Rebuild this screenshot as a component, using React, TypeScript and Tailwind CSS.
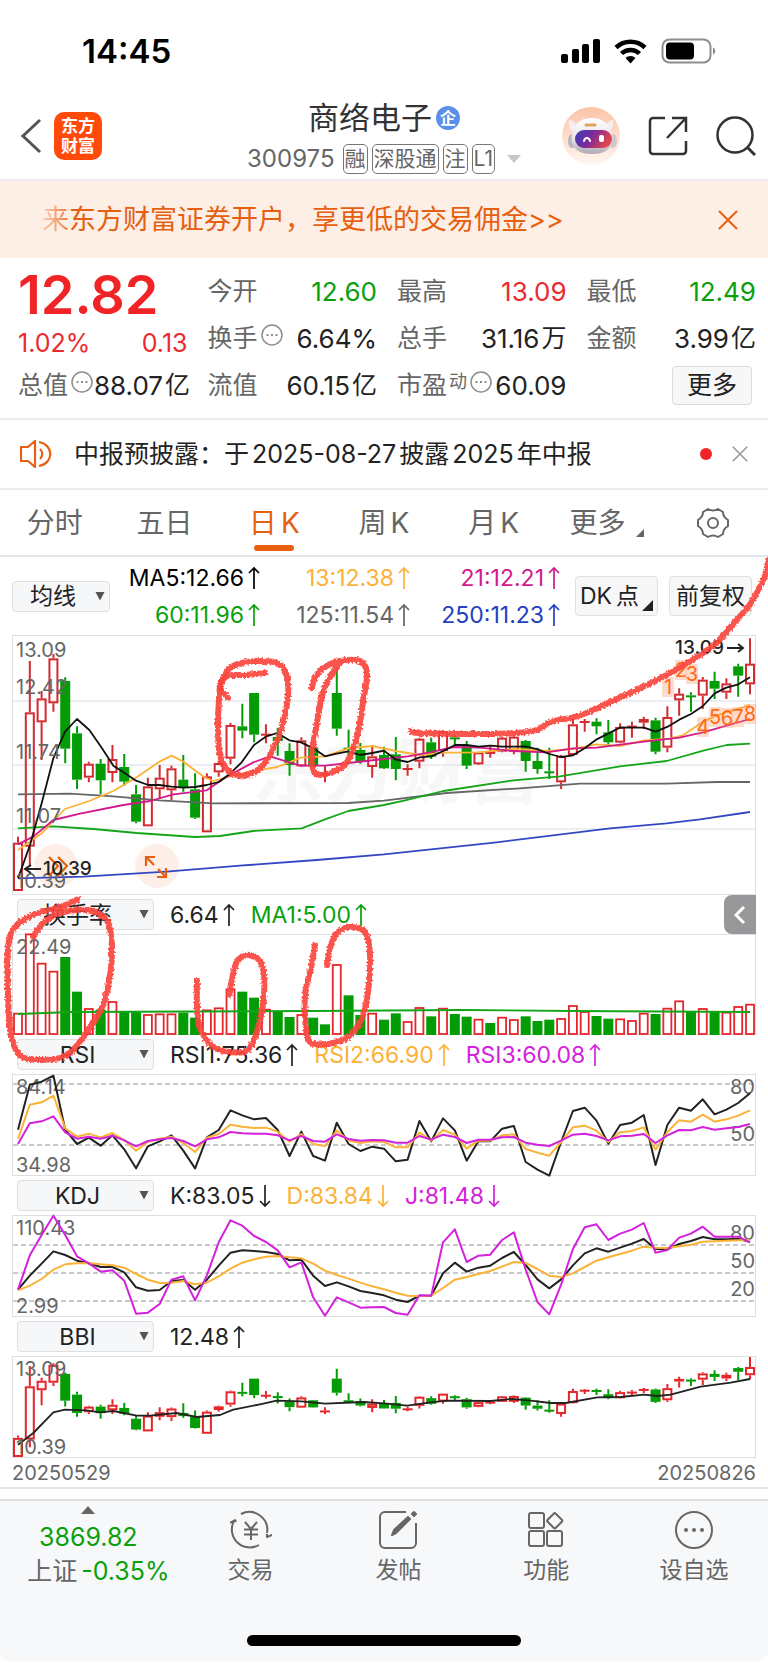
import React from 'react';

type Candle = [high: number, top: number, bottom: number, low: number, up: 0 | 1];
type Point = [number, number];

// Plot levels are stored at three units per pixel, y growing downwards.
const UNIT = 3;
const RED = '#d22b30';
const GREEN = '#039c05';
const MAGENTA = '#d321dc';
const ORANGE = '#fbb236';
const INK = '#222222';
const MUTED = '#666666';

const candles: Candle[] = [
  [845, 863, 1008, 1008, 1], [318, 472, 875, 935, 1], [408, 430, 502, 615, 1], [297, 310, 445, 470, 1],
  [367, 378, 581, 625, 0], [514, 535, 674, 702, 0], [620, 626, 668, 682, 1], [612, 626, 676, 718, 0],
  [570, 612, 654, 682, 1], [597, 636, 680, 692, 0], [690, 718, 800, 805, 0], [668, 694, 814, 814, 1],
  [630, 668, 703, 730, 1], [632, 640, 706, 735, 1], [600, 674, 698, 710, 0], [655, 703, 788, 792, 0],
  [655, 664, 832, 832, 1], [618, 624, 652, 665, 1], [504, 510, 611, 628, 1], [446, 514, 527, 550, 0],
  [414, 414, 539, 562, 0], [508, 536, 542, 565, 1], [518, 546, 558, 602, 0], [565, 588, 630, 662, 0],
  [547, 556, 634, 636, 1], [576, 578, 632, 634, 0], [630, 655, 662, 682, 1], [340, 414, 521, 542, 0],
  [524, 578, 582, 600, 0], [564, 585, 618, 626, 0], [570, 604, 636, 668, 1], [575, 600, 640, 642, 0],
  [546, 598, 642, 676, 0], [628, 639, 643, 662, 1], [548, 551, 620, 640, 1], [548, 562, 605, 612, 0],
  [526, 528, 588, 605, 1], [540, 547, 552, 575, 0], [558, 570, 632, 642, 0], [590, 592, 628, 630, 1],
  [575, 588, 597, 608, 1], [546, 548, 590, 592, 1], [542, 545, 590, 598, 1], [555, 558, 618, 650, 0],
  [578, 618, 642, 656, 0], [578, 649, 653, 672, 0], [600, 603, 682, 702, 1], [490, 508, 600, 603, 1],
  [492, 498, 503, 530, 1], [490, 500, 514, 538, 0], [495, 532, 562, 570, 0], [505, 516, 563, 565, 1],
  [500, 512, 517, 548, 1], [485, 492, 503, 522, 1], [488, 496, 590, 598, 0], [454, 486, 578, 592, 1],
  [400, 416, 436, 482, 1], [412, 421, 425, 470, 0], [366, 374, 422, 462, 1], [350, 378, 401, 432, 0],
  [370, 385, 413, 432, 1], [326, 334, 362, 425, 0], [250, 326, 388, 418, 1],
];

// Negative values are down days.
const turnover = [
  64, 302, 214, 190, -234, -130, 78, -76, 99, -69, -69, 60, 62, 62, -67, -52, 74, 80, 137, -130, -112,
  76, -70, -54, 60, -52, -32, 210, -119, -60, 64, -46, -65, 39, 81, -56, 79, -63, -55, 46, -36, 52, 45,
  -56, -42, -46, 48, 87, 69, -57, -49, 47, 42, 64, -63, 79, 101, -69, 78, -69, 67, 84, 91,
];

const rsi = {
  fast: [
    705, 570, 561, 543, 705, 748, 729, 753, 722, 764, 821, 755, 740, 722, 768, 821, 728, 706, 647, 662, 674,
    670, 706, 784, 711, 784, 798, 684, 748, 769, 756, 762, 800, 795, 679, 740, 671, 707, 798, 739, 740, 702,
    694, 802, 825, 843, 742, 649, 639, 678, 747, 691, 684, 661, 811, 691, 639, 648, 614, 659, 645, 625, 596,
  ],
  mid: [
    733, 630, 623, 603, 701, 726, 717, 728, 715, 736, 768, 741, 732, 726, 745, 772, 729, 718, 690, 696, 700,
    699, 711, 741, 718, 748, 754, 708, 737, 745, 740, 742, 758, 758, 714, 738, 706, 720, 762, 738, 738, 722,
    719, 763, 774, 783, 742, 698, 693, 708, 742, 713, 709, 698, 765, 712, 677, 681, 660, 681, 674, 663, 647,
  ],
  slow: [
    748, 686, 680, 665, 713, 732, 726, 732, 723, 737, 755, 739, 734, 730, 739, 755, 734, 728, 712, 716, 717,
    717, 722, 737, 724, 739, 741, 719, 733, 738, 736, 737, 744, 744, 724, 735, 720, 727, 745, 735, 735, 728,
    727, 744, 750, 754, 738, 720, 717, 724, 737, 725, 723, 718, 745, 722, 706, 707, 697, 705, 701, 697, 688,
  ],
};

const kdj = {
  k: [
    330, 288, 252, 215, 226, 243, 251, 262, 262, 278, 323, 333, 331, 304, 301, 330, 300, 258, 219, 212, 214,
    217, 223, 242, 240, 288, 319, 308, 320, 334, 340, 347, 360, 367, 348, 348, 281, 249, 276, 264, 258, 235,
    217, 256, 299, 326, 299, 257, 221, 206, 216, 204, 192, 178, 208, 209, 193, 184, 172, 179, 179, 178, 186,
  ],
  d: [
    332, 318, 298, 270, 254, 251, 250, 254, 257, 264, 283, 300, 310, 309, 304, 314, 309, 290, 267, 249, 239,
    231, 229, 233, 236, 252, 273, 286, 297, 309, 320, 329, 339, 348, 349, 348, 325, 300, 292, 283, 274, 261,
    247, 250, 268, 288, 292, 281, 262, 243, 233, 223, 213, 201, 204, 205, 200, 195, 186, 185, 183, 182, 182,
  ],
  j: [
    330, 227, 166, 108, 166, 230, 251, 276, 272, 303, 402, 399, 373, 300, 290, 362, 287, 188, 122, 138, 169,
    187, 212, 263, 248, 353, 408, 353, 368, 384, 383, 382, 400, 405, 347, 348, 188, 149, 247, 228, 225, 181,
    158, 270, 367, 404, 315, 208, 143, 134, 181, 162, 150, 130, 219, 211, 174, 162, 141, 171, 171, 171, 188,
  ],
};

const averages: { color: string; points: Point[] }[] = [
  { color: '#3347c4', points: [[54, 970], [250, 965], [500, 950], [720, 932], [950, 915], [1152, 898], [1490, 862], [1830, 820], [2000, 805], [2100, 793], [2250, 771]] },
  { color: MUTED, points: [[54, 718], [210, 716], [340, 724], [478, 736], [640, 745], [1045, 744], [1152, 737], [1340, 714], [1560, 700], [1740, 686], [2000, 686], [2150, 681], [2250, 681]] },
  { color: '#13a518', points: [[54, 820], [160, 814], [280, 822], [410, 834], [585, 846], [660, 843], [760, 828], [905, 820], [975, 793], [1045, 768], [1152, 750], [1212, 737], [1330, 708], [1540, 676], [1680, 664], [1860, 634], [2000, 618], [2110, 587], [2180, 570], [2250, 566]] },
  { color: ORANGE, points: [[54, 885], [125, 835], [195, 762], [268, 738], [340, 708], [408, 668], [478, 620], [515, 602], [550, 620], [615, 668], [640, 678], [690, 664], [760, 648], [832, 636], [903, 608], [975, 604], [1045, 580], [1117, 573], [1188, 588], [1259, 600], [1330, 593], [1436, 592], [1542, 582], [1648, 588], [1719, 582], [1790, 568], [1861, 573], [1932, 556], [2003, 552], [2050, 540], [2109, 500], [2160, 478], [2250, 450]] },
  { color: '#d11a8c', points: [[54, 868], [100, 845], [160, 795], [240, 776], [370, 750], [450, 738], [520, 718], [620, 706], [680, 665], [760, 622], [810, 604], [900, 632], [975, 632], [1045, 624], [1152, 612], [1223, 604], [1290, 592], [1360, 576], [1440, 578], [1540, 588], [1640, 592], [1719, 580], [1790, 578], [1932, 560], [2038, 548], [2109, 532], [2250, 492]] },
  { color: '#111111', points: [[54, 970], [90, 870], [125, 745], [160, 610], [195, 530], [231, 492], [268, 525], [303, 575], [340, 632], [374, 654], [408, 677], [445, 690], [478, 690], [515, 695], [550, 698], [585, 696], [620, 690], [656, 681], [690, 656], [725, 622], [762, 570], [797, 545], [832, 534], [868, 556], [903, 562], [940, 580], [975, 604], [1010, 596], [1045, 589], [1080, 600], [1117, 594], [1152, 587], [1188, 614], [1223, 621], [1259, 607], [1294, 604], [1330, 588], [1365, 570], [1400, 570], [1436, 575], [1471, 572], [1507, 575], [1542, 575], [1577, 574], [1613, 583], [1648, 597], [1684, 606], [1719, 601], [1754, 580], [1790, 553], [1826, 535], [1861, 517], [1896, 518], [1932, 518], [1967, 530], [2003, 515], [2038, 494], [2073, 477], [2109, 453], [2144, 415], [2179, 398], [2215, 388], [2250, 367]] },
];

const bbi: Point[] = [
  [54, 795], [100, 760], [160, 698], [195, 690], [260, 692], [300, 698], [340, 694], [410, 708], [450, 708],
  [530, 700], [590, 712], [660, 706], [700, 690], [780, 674], [830, 663], [905, 665], [975, 672], [1090, 667],
  [1152, 671], [1222, 678], [1292, 668], [1342, 663], [1472, 664], [1537, 658], [1592, 663], [1652, 670],
  [1697, 670], [1792, 653], [1862, 652], [1932, 645], [1972, 649], [2012, 645], [2102, 621], [2192, 609], [2250, 598],
];

// Hand-drawn marks, in pixels of the page.
const scribbles: Point[][] = [
  [[411, 731], [421, 733], [484, 734], [517, 733], [537, 730], [551, 722], [581, 715], [617, 699], [651, 683], [684, 665], [714, 645], [734, 623], [751, 603], [764, 578], [769, 558]],
  [[265, 673], [245, 675], [227, 676], [220, 687], [228, 698]],
  [[220, 684], [230, 668], [247, 662], [277, 663], [287, 677], [287, 705], [278, 738], [263, 765], [247, 775], [230, 772], [220, 755], [218, 722], [220, 684]],
  [[312, 688], [315, 677], [328, 665], [347, 660], [362, 662], [367, 675], [363, 702], [358, 732], [347, 762], [330, 773], [315, 773], [312, 755], [317, 722], [323, 692], [333, 672], [340, 663]],
  [[78, 899], [63, 906], [33, 915], [15, 927], [8, 948], [8, 995], [11, 1035], [20, 1055], [40, 1060], [67, 1055], [87, 1032], [103, 1005], [111, 968], [111, 935], [105, 918], [87, 910], [60, 913], [43, 923], [33, 937]],
  [[197, 981], [197, 1005], [200, 1028], [213, 1047], [230, 1052], [248, 1050], [258, 1028], [264, 995], [262, 965], [250, 955], [238, 960], [233, 975], [229, 995]],
  [[315, 945], [311, 968], [305, 995], [306, 1028], [310, 1042], [327, 1044], [347, 1038], [362, 1018], [368, 992], [370, 955], [365, 932], [350, 927], [337, 933], [330, 948], [327, 965]],
];

const xAt = (i: number) => 6 + (i * 732) / 62;
const toPolyline = (points: Point[], top: number) =>
  points.map(([x, y]) => `${(x - 36) / UNIT},${(y - top) / UNIT}`).join(' ');
const seriesLine = (values: number[], top: number) =>
  values.map((v, i) => `${xAt(i)},${(v - top) / UNIT}`).join(' ');

const smoothPath = (p: Point[]) => {
  let d = `M${p[0][0]} ${p[0][1]}`;
  for (let i = 0; i < p.length - 1; i++) {
    const a = p[i - 1] || p[i];
    const b = p[i];
    const c = p[i + 1];
    const e = p[i + 2] || c;
    d += `C${b[0] + (c[0] - a[0]) / 6} ${b[1] + (c[1] - a[1]) / 6} ${c[0] - (e[0] - b[0]) / 6} ${c[1] - (e[1] - b[1]) / 6} ${c[0]} ${c[1]}`;
  }
  return d;
};

const Plot = ({ height, label, children }: { height: number; label: string; children: React.ReactNode }) => (
  <svg viewBox={`0 0 744 ${height}`} className="block w-full overflow-visible" role="img" aria-label={label}>
    <rect x="0.5" y="0.5" width="743" height={height - 1} fill="none" stroke="#dedfe3" />
    {children}
  </svg>
);

const AxisText = ({ x, y, end, children }: { x: number; y: number; end?: boolean; children: React.ReactNode }) => (
  <text x={x} y={y} fontSize="20" fill={MUTED} textAnchor={end ? 'end' : 'start'}>
    {children}
  </text>
);

const Candles = ({ scale, up }: { scale: (v: number) => number; up: string }) => (
  <g>
    {candles.map(([high, top, bottom, low, rising], i) => {
      const x = xAt(i);
      const color = rising ? up : GREEN;
      const y1 = scale(top);
      const y2 = scale(bottom);
      const h = Math.max(y2 - y1, 2);
      return (
        <g key={i} stroke={color} strokeWidth="2">
          <path d={`M${x} ${scale(high)}V${y1}M${x} ${y2}V${scale(low)}`} />
          {rising && h > 4 ? (
            <rect x={x - 4} y={y1 + 1} width="8" height={h - 2} fill="none" />
          ) : (
            <rect x={x - 5} y={y1} width="10" height={h} fill={color} stroke="none" />
          )}
        </g>
      );
    })}
  </g>
);

const Dashes = ({ levels }: { levels: number[] }) => (
  <g stroke="#c9cacd" strokeWidth="2" strokeDasharray="5 3">
    {levels.map((y) => (
      <path key={y} d={`M1 ${y}H743`} />
    ))}
  </g>
);

const Arrow = ({ down }: { down?: boolean }) => (
  <svg viewBox="0 0 12 24" className="h-6 w-3 shrink-0" fill="none" stroke="currentColor" strokeWidth="1.7" aria-hidden="true">
    {down ? <path d="M6 1V22M1 17l5 5 5-5" /> : <path d="M6 23V2M1 7l5-5 5 5" />}
  </svg>
);

const DotCircle = () => (
  <svg viewBox="0 0 24 24" className="mb-2 h-6 w-6 shrink-0" fill="none" stroke="#8d8d8d" strokeWidth="1.5" aria-hidden="true">
    <circle cx="12" cy="12" r="10" />
    <path d="M6.5 12h2M11 12h2M15.5 12h2" strokeWidth="2.2" />
  </svg>
);

const Stat = ({ label, value, unit, tone = 'text-[#222]', extra }: { label: string; value: string; unit?: string; tone?: string; extra?: React.ReactNode }) => (
  <div className="flex h-[47px] items-center justify-between whitespace-nowrap">
    <dt className="flex items-center gap-0.5 text-[#666]">
      {label}
      {extra}
    </dt>
    <dd className={`flex items-center gap-0.5 ${tone}`}>
      <span className="text-[26px]">{value}</span>
      {unit}
    </dd>
  </div>
);

const Picker = ({ name, label, className }: { name: string; label: string; className: string }) => (
  <div className={`relative ${className}`}>
    <select
      aria-label={name}
      className="block h-[31px] w-full appearance-none rounded-sm border border-[#dddfe2] bg-[#f6f7f9] pr-4 text-center text-[23px] leading-7 text-[#222] [text-align-last:center]"
    >
      <option>{label}</option>
    </select>
    <svg viewBox="0 0 10 9" className="pointer-events-none absolute top-[11px] right-[5px] h-[9px] w-[10px]" aria-hidden="true">
      <path d="M0.5 0h9L5 8.5z" fill="#555" />
    </svg>
  </div>
);

const Indicator = ({ name, readings, children }: { name: string; readings: { text: string; color: string; down?: boolean }[]; children?: React.ReactNode }) => (
  <div className="flex h-[39px] items-center pl-[5px]">
    <Picker name={`${name} 指标`} label={name} className="w-[137px]" />
    <div className="ml-4 flex items-center gap-4 text-[23px] leading-7">
      {readings.map((r) => (
        <span key={r.text} className={`flex items-center gap-1 ${r.color}`}>
          {r.text}
          <Arrow down={r.down} />
        </span>
      ))}
    </div>
    {children}
  </div>
);

const StatusBar = () => (
  <div className="flex h-24 items-center justify-between pt-1.5 pr-[52px] pl-[82px]">
    <span className="text-[33px] leading-10 font-semibold text-black">14:45</span>
    <svg viewBox="0 0 156 28" className="h-7 w-[156px]" role="img" aria-label="信号、无线网络、电量">
      <g>
        <rect x="1" y="17" width="7" height="9" rx="2" />
        <rect x="12" y="12" width="7" height="14" rx="2" />
        <rect x="22" y="7" width="7" height="19" rx="2" />
        <rect x="33" y="2" width="7" height="24" rx="2" />
      </g>
      <g fill="none" stroke="#000" strokeWidth="4.5">
        <path d="M56 10.5a21 21 0 0 1 29 0" />
        <path d="M61.5 16.5a13 13 0 0 1 18 0" />
      </g>
      <path d="M65.5 21a7 7 0 0 1 10 0l-5 5.5z" />
      <rect x="102.5" y="2.5" width="48" height="23" rx="7" fill="none" stroke="#8d8d8d" strokeWidth="2" />
      <rect x="106" y="5.5" width="28" height="17" rx="4" />
      <path d="M153 10.5c3 1 3 6 0 7z" fill="#8d8d8d" />
    </svg>
  </div>
);

const Robot = () => (
  <svg viewBox="0 0 58 58" className="h-[58px] w-[58px]" aria-hidden="true">
    <defs>
      <linearGradient id="halo" x1="0" y1="0" x2="0" y2="1">
        <stop offset="0" stopColor="#fcc3a7" />
        <stop offset="1" stopColor="#fff6f1" />
      </linearGradient>
      <linearGradient id="visor" x1="0" y1="0" x2="1" y2="0.3">
        <stop offset="0" stopColor="#3a3fb8" />
        <stop offset="0.5" stopColor="#7b2a9c" />
        <stop offset="1" stopColor="#e0454f" />
      </linearGradient>
      <linearGradient id="shell" x1="0" y1="0" x2="0" y2="1">
        <stop offset="0" stopColor="#ffffff" />
        <stop offset="0.6" stopColor="#e6e1e6" />
        <stop offset="1" stopColor="#aeaab2" />
      </linearGradient>
    </defs>
    <circle cx="29" cy="29" r="29" fill="url(#halo)" />
    <path d="M7 13c4 0 7 3 7 7l-4 4c-3-3-4-7-3-11zM51 13c-4 0-7 3-7 7l4 4c3-3 4-7 3-11z" fill="#f6eeee" />
    <ellipse cx="10" cy="34" rx="4" ry="7" fill="#b9b5be" />
    <ellipse cx="51" cy="34" rx="4" ry="7" fill="#cfc6cc" />
    <path d="M12 21c4-8 11-10 18-10s14 3 17 10c3 5 4 10 3 15-2 8-11 11-20 11S12 44 10 36c-1-5 0-10 2-15z" fill="url(#shell)" />
    <path d="M24 18h9" stroke="#dfa45e" strokeWidth="3" strokeLinecap="round" />
    <rect x="13" y="23" width="37" height="18" rx="9" fill="url(#visor)" />
    <path d="M22 34c1-4 5-4 6 0" fill="none" stroke="#fff" strokeWidth="2" strokeLinecap="round" />
    <rect x="37" y="28" width="5" height="7" rx="2" fill="#fff" />
  </svg>
);

const Header = () => (
  <header className="grid h-[85px] grid-cols-[1fr_auto_1fr] items-center border-b-2 border-[#ececef] px-3 pb-1 text-[#333]">
    <div className="flex items-center gap-3 pl-2">
      <button type="button" aria-label="返回">
        <svg viewBox="0 0 22 36" className="h-9 w-[22px]" fill="none" stroke="#555" strokeWidth="3">
          <path d="M20 2L3 18l17 16" />
        </svg>
      </button>
      <span className="flex h-12 w-12 flex-col items-center justify-center rounded-[10px] bg-[#ff4a0a] text-[17px] leading-5 font-bold text-white">
        <span>东方</span>
        <span>财富</span>
      </span>
    </div>
    <div className="flex flex-col items-center gap-1.5">
      <h1 className="flex items-center gap-1 text-[31px] leading-10">
        商络电子
        <span className="flex h-6 w-6 items-center justify-center rounded-full bg-[#5b8fe8] text-base leading-4 font-bold text-white">企</span>
      </h1>
      <div className="flex items-center gap-1 text-[21px] leading-7 text-[#666]">
        <span className="mr-1 text-2xl leading-7">300975</span>
        {['融', '深股通', '注', 'L1'].map((tag) => (
          <span key={tag} className="rounded-[5px] border border-[#777] px-px">
            {tag}
          </span>
        ))}
        <svg viewBox="0 0 14 8" className="ml-2 h-2 w-[14px]" aria-hidden="true">
          <path d="M0 0h14L7 8z" fill="#c8c8ca" />
        </svg>
      </div>
    </div>
    <div className="flex items-center justify-end gap-7">
      <button type="button" aria-label="智能助手">
        <Robot />
      </button>
      <button type="button" aria-label="分享">
        <svg viewBox="0 0 40 40" className="h-10 w-10" fill="none" stroke="#333" strokeWidth="2.5">
          <path d="M17 2H5a3 3 0 0 0-3 3v30a3 3 0 0 0 3 3h30a3 3 0 0 0 3-3V25M24 2h14v14M38 2L19 22" />
        </svg>
      </button>
      <button type="button" aria-label="搜索">
        <svg viewBox="0 0 40 40" className="h-10 w-10" fill="none" stroke="#333" strokeWidth="2.5">
          <circle cx="19" cy="19" r="17.5" />
          <path d="M31 31l8 8" strokeWidth="3" />
        </svg>
      </button>
    </div>
  </header>
);

const CloseMark = ({ className }: { className: string }) => (
  <svg viewBox="0 0 20 20" className={className} fill="none" stroke="currentColor" strokeWidth="2" aria-hidden="true">
    <path d="M1 1l18 18M19 1L1 19" />
  </svg>
);

const Quote = () => (
  <dl className="grid grid-cols-4 gap-x-5 border-b-2 border-[#ececef] pt-[10px] pr-3 pb-[9px] pl-[18px] text-[25px]">
    <div>
      <div className="flex h-[54px] items-center text-[54px] leading-none font-semibold text-[#f02427]">12.82</div>
      <div className="flex h-10 items-center justify-between pt-1 text-[#ea2b2e]">
        <span>1.02%</span>
        <span>0.13</span>
      </div>
      <Stat label="总值" value="88.07" unit="亿" extra={<DotCircle />} />
    </div>
    <div>
      <Stat label="今开" value="12.60" tone="text-[#0aa00c]" />
      <Stat label="换手" value="6.64%" extra={<DotCircle />} />
      <Stat label="流值" value="60.15" unit="亿" />
    </div>
    <div>
      <Stat label="最高" value="13.09" tone="text-[#ea2b2e]" />
      <Stat label="总手" value="31.16" unit="万" />
      <Stat
        label="市盈"
        value="60.09"
        extra={
          <>
            <span className="mb-2 text-lg leading-6">动</span>
            <DotCircle />
          </>
        }
      />
    </div>
    <div>
      <Stat label="最低" value="12.49" tone="text-[#0aa00c]" />
      <Stat label="金额" value="3.99" unit="亿" />
      <div className="flex h-[47px] items-center justify-end pr-1">
        <button type="button" className="h-[39px] w-20 rounded-sm border border-[#dcdcdf] bg-[#f7f7f8] text-[#222]">更多</button>
      </div>
    </div>
  </dl>
);

const Notice = () => (
  <div className="flex h-[70px] items-center border-b-2 border-[#ececef] px-5">
    <svg viewBox="0 0 34 30" className="h-[30px] w-[34px]" fill="none" stroke="#e6600f" strokeWidth="2.2" strokeLinejoin="round" aria-hidden="true">
      <path d="M1 8h7l7-6v26l-7-6H1zM20 10c3 3 3 7 0 10M19 3c15 3 15 21 0 24" />
    </svg>
    <p className="ml-5 flex flex-1 gap-[3px] text-[25px] leading-9 whitespace-nowrap text-[#222]">
      <span>中报预披露：于</span>
      <span>2025-08-27</span>
      <span>披露</span>
      <span>2025</span>
      <span>年中报</span>
    </p>
    <span className="mr-5 h-3 w-3 rounded-full bg-[#f02427]" />
    <button type="button" aria-label="关闭公告" className="text-[#999]">
      <CloseMark className="h-4 w-4" />
    </button>
  </div>
);

const Tabs = () => (
  <nav className="grid h-[67px] grid-cols-7 border-b-2 border-[#e4e5e8] text-[28px] text-[#666]">
    {['分时', '五日', '日K', '周K', '月K', '更多'].map((tab) => (
      <button
        key={tab}
        type="button"
        className={`relative flex items-center justify-center gap-1 ${tab === '日K' ? 'text-[#e6600f]' : ''} ${tab === '更多' ? 'pr-3' : ''}`}
      >
        {tab.endsWith('K') ? (
          <>
            <span>{tab[0]}</span>
            <span>K</span>
          </>
        ) : (
          tab
        )}
        {tab === '日K' && <span className="absolute bottom-[4px] left-1/2 h-[6px] w-10 -translate-x-1/2 rounded-sm bg-[#e6600f]" />}
        {tab === '更多' && (
          <svg viewBox="0 0 8 8" className="absolute right-[14px] bottom-[18px] h-2 w-2" aria-hidden="true">
            <path d="M8 0v8H0z" fill="#666" />
          </svg>
        )}
      </button>
    ))}
    <button type="button" aria-label="设置" className="flex items-center justify-center">
      <svg viewBox="0 0 34 34" className="h-[34px] w-[34px]" fill="none" stroke="#666" strokeWidth="2" strokeLinejoin="round">
        <path d="M12 3q5 3 10 0l5 3q0 5 5 8v6q-5 3-5 8l-5 3q-5-3-10 0l-5-3q0-5-5-8v-6q5-3 5-8z" />
        <circle cx="17" cy="17" r="5" />
      </svg>
    </button>
  </nav>
);

const averageReadings = [
  { text: 'MA5:12.66', color: 'text-black' },
  { text: '13:12.38', color: 'text-[#fbb236]' },
  { text: '21:12.21', color: 'text-[#d11a8c]' },
  { text: '60:11.96', color: 'text-[#0aa00c]' },
  { text: '125:11.54', color: 'text-[#666]' },
  { text: '250:11.23', color: 'text-[#2440c0]' },
];

const AverageBar = () => (
  <div className="flex h-[78px] items-center pr-1">
    <Picker name="主图指标" label="均线" className="w-[98px]" />
    <div className="grid flex-1 grid-cols-3 gap-y-[9px] text-[23px] leading-7">
      {averageReadings.map((r) => (
        <span key={r.text} className={`flex items-center justify-end gap-1 ${r.color}`}>
          {r.text}
          <Arrow />
        </span>
      ))}
    </div>
    <button type="button" className="relative ml-[15px] flex h-10 w-[83px] items-center gap-1 rounded-sm border border-[#dddfe2] bg-[#f7f7f8] pl-1 text-[23px] whitespace-nowrap text-[#222]">
      <span>DK</span>
      <span>点</span>
      <svg viewBox="0 0 11 11" className="absolute right-1 bottom-1 h-[11px] w-[11px]" aria-hidden="true">
        <path d="M11 0v11H0z" fill="#222" />
      </svg>
    </button>
    <button type="button" className="ml-[11px] h-10 w-[83px] rounded-sm border border-[#dddfe2] bg-[#f7f7f8] text-[23px] whitespace-nowrap text-[#222]">前复权</button>
  </div>
);

const signals: [string, number, number][] = [
  ['1', 656, 59], ['2', 669, 42], ['3', 680, 46], ['4', 691, 99], ['5', 703, 89], ['6', 715, 90], ['7', 726, 89], ['8', 738, 86],
];

const PriceChart = () => (
  <Plot height={260} label="日K线图">
    <text x="240" y="162" fontSize="72" fontWeight="700" fill="#f7f7f8">东方财富</text>
    <path d="M1 66H743M1 130H743M1 194H743" stroke="#e8e9ee" strokeWidth="1.5" />
    <circle cx="44" cy="231" r="22" fill="#fbd9cb" opacity="0.45" />
    <circle cx="145" cy="231" r="22" fill="#fbd9cb" opacity="0.45" />
    <Candles scale={(v) => (v - 240) / UNIT} up={RED} />
    {averages.map((a) => (
      <polyline key={a.color} points={toPolyline(a.points, 240)} fill="none" stroke={a.color} strokeWidth="1.8" strokeLinejoin="round" />
    ))}
    <AxisText x={4} y={22}>13.09</AxisText>
    <AxisText x={4} y={59}>12.42</AxisText>
    <AxisText x={4} y={124}>11.74</AxisText>
    <AxisText x={4} y={188}>11.07</AxisText>
    <AxisText x={4} y={253}>10.39</AxisText>
    {signals.map(([digit, x, y]) => (
      <g key={digit}>
        <rect x={x - 6} y={y - 17} width="12" height="20" fill="#fb8a5a" opacity="0.3" />
        <text x={x} y={y} fontSize="20" fill="#ff6a13" textAnchor="middle">{digit}</text>
      </g>
    ))}
    <g fill="none" stroke="#e6600f" strokeWidth="2.2">
      <path d="M37 222l9 9-9 10M46 222l9 9-9 10" />
      <path d="M134 231v-9h9M134 222l8 8M154 233v9h-9M154 242l-8-8" />
    </g>
    <g fontSize="19" fontWeight="500" fill={INK}>
      <text x="663" y="19">13.09</text>
      <text x="31" y="240">10.39</text>
    </g>
    <path d="M715 13h16M726 9l5 4-5 4M29 234H14M19 230l-6 4 6 4" fill="none" stroke={INK} strokeWidth="2" />
  </Plot>
);

const TurnoverChart = () => (
  <Plot height={101} label="换手率图">
    {turnover.map((v, i) => {
      const h = Math.abs(v) / UNIT;
      return v > 0 ? (
        <rect key={i} x={xAt(i) - 4} y={101 - h} width="8" height={h - 1} fill="none" stroke="#e6262b" strokeWidth="1.8" />
      ) : (
        <rect key={i} x={xAt(i) - 5} y={101 - h} width="10" height={h} fill={GREEN} />
      );
    })}
    <polyline points="6,80 60,78 300,77 450,76 560,77 738,78" fill="none" stroke="#13a518" strokeWidth="1.8" />
    <AxisText x={4} y={20}>22.49</AxisText>
  </Plot>
);

const RsiChart = () => (
  <Plot height={102} label="RSI 图">
    <Dashes levels={[10, 71]} />
    <AxisText x={4} y={20}>84.14</AxisText>
    <AxisText x={4} y={98}>34.98</AxisText>
    <AxisText x={743} y={20} end>80</AxisText>
    <AxisText x={743} y={67} end>50</AxisText>
    <g fill="none" strokeWidth="2" strokeLinejoin="round">
      <polyline points={seriesLine(rsi.fast, 538)} stroke={INK} />
      <polyline points={seriesLine(rsi.mid, 538)} stroke={ORANGE} />
      <polyline points={seriesLine(rsi.slow, 538)} stroke={MAGENTA} />
    </g>
  </Plot>
);

const KdjChart = () => (
  <Plot height={102} label="KDJ 图">
    <Dashes levels={[30, 58, 86]} />
    <AxisText x={4} y={20}>110.43</AxisText>
    <AxisText x={4} y={98}>2.99</AxisText>
    <AxisText x={743} y={25} end>80</AxisText>
    <AxisText x={743} y={53} end>50</AxisText>
    <AxisText x={743} y={81} end>20</AxisText>
    <g fill="none" strokeWidth="2" strokeLinejoin="round">
      <polyline points={seriesLine(kdj.k, 106)} stroke={INK} />
      <polyline points={seriesLine(kdj.d, 106)} stroke={ORANGE} />
      <polyline points={seriesLine(kdj.j, 106)} stroke={MAGENTA} />
    </g>
  </Plot>
);

const BbiChart = () => (
  <Plot height={102} label="BBI 图">
    <Candles scale={(v) => 1 + ((v - 250) / 758) * 100} up="#e6262b" />
    <polyline points={toPolyline(bbi, 529)} fill="none" stroke={INK} strokeWidth="1.8" strokeLinejoin="round" />
    <AxisText x={4} y={20}>13.09</AxisText>
    <AxisText x={4} y={98}>10.39</AxisText>
  </Plot>
);

const Scribbles = () => (
  <svg viewBox="0 557 768 520" className="pointer-events-none absolute top-0 left-0 w-full overflow-hidden" aria-hidden="true">
    <filter id="crayon" x="0" y="557" width="768" height="520" filterUnits="userSpaceOnUse">
      <feTurbulence type="fractalNoise" baseFrequency="0.5" numOctaves="2" seed="4" />
      <feDisplacementMap in="SourceGraphic" scale="5" xChannelSelector="R" yChannelSelector="G" />
    </filter>
    <g fill="none" stroke="#fb453d" strokeWidth="6" strokeOpacity="0.92" strokeLinecap="round" strokeLinejoin="round" filter="url(#crayon)">
      {scribbles.map((s, i) => (
        <path key={i} d={smoothPath(s)} />
      ))}
    </g>
  </svg>
);

const navIcons: { label: string; icon: React.ReactNode }[] = [
  {
    label: '交易',
    icon: (
      <>
        <path d="M11 5a18 18 0 0 1 26 19M29 36A18 18 0 0 1 4 12M0 14l5-3 1 2M42 26l-5 2v-3" />
        <path d="M15 13l6 7 6-7M21 20v11M14 20.5h14M14 25.5h14" />
      </>
    ),
  },
  {
    label: '发帖',
    icon: (
      <>
        <path d="M29 3H8a5 5 0 0 0-5 5v26a5 5 0 0 0 5 5h26a5 5 0 0 0 5-5V14" />
        <path d="M15 26l2-5L31 8l2 2L19 24zM35 5l2-2 2 2-2 2z" fill="currentColor" />
      </>
    ),
  },
  {
    label: '功能',
    icon: (
      <>
        <rect x="4" y="4" width="15" height="15" rx="2" />
        <rect x="4" y="22" width="15" height="15" rx="2" />
        <rect x="22" y="22" width="15" height="15" rx="2" />
        <rect x="24" y="6" width="11.5" height="11.5" rx="1.5" transform="rotate(45 29.75 11.75)" />
      </>
    ),
  },
  {
    label: '设自选',
    icon: (
      <>
        <circle cx="21" cy="21" r="18" />
        <g fill="currentColor" stroke="none">
          <circle cx="13" cy="21" r="2" />
          <circle cx="21" cy="21" r="2" />
          <circle cx="29" cy="21" r="2" />
        </g>
      </>
    ),
  },
];

const BottomBar = () => (
  <footer className="rounded-b-xl border-t-2 border-[#dfdfe1] bg-[#f7f8fa] text-[#666]">
    <div className="flex h-[134px] pt-[5px]">
      <button type="button" className="flex w-[23%] flex-col items-center text-[25px] leading-8">
        <svg viewBox="0 0 14 8" className="h-2 w-[14px]" aria-hidden="true">
          <path d="M7 0l7 8H0z" fill="#666" />
        </svg>
        <span className="mt-[7px] text-[#0aa00c]">3869.82</span>
        <span className="mt-[2px] flex gap-1 pl-5 whitespace-nowrap">
          上证
          <span className="text-[#0aa00c]">-0.35%</span>
        </span>
      </button>
      {navIcons.map((item) => (
        <button key={item.label} type="button" className="flex flex-1 flex-col items-center pt-[3px] text-[23px] leading-8">
          <svg viewBox="0 0 42 42" className="h-[42px] w-[42px]" fill="none" stroke="currentColor" strokeWidth="2" strokeLinejoin="round" aria-hidden="true">
            {item.icon}
          </svg>
          <span className="mt-[3px]">{item.label}</span>
        </button>
      ))}
    </div>
    <div className="flex justify-center pb-4">
      <div className="h-[11px] w-[274px] rounded-full bg-black" />
    </div>
  </footer>
);

export default function App() {
  return (
    <div className="bg-white font-['Inter','Noto_Sans_CJK_SC',sans-serif] text-[#222]">
      <StatusBar />
      <Header />
      <div className="flex h-[77px] items-center justify-between bg-[#fdeee6] pr-[30px] pl-[42px] text-[#e6600f]">
        <a href="#open" className="text-[27px] leading-9 whitespace-nowrap">
          <span className="bg-gradient-to-r from-[#f9cfb5] to-[#ec7a38] bg-clip-text text-transparent">来</span>
          东方财富证券开户，享更低的交易佣金&gt;&gt;
        </a>
        <button type="button" aria-label="关闭广告">
          <CloseMark className="h-5 w-5" />
        </button>
      </div>
      <Quote />
      <Notice />
      <Tabs />
      <main className="relative px-3">
        <AverageBar />
        <PriceChart />
        <Indicator name="换手率" readings={[{ text: '6.64', color: 'text-[#222]' }, { text: 'MA1:5.00', color: 'text-[#0aa00c]' }]}>
          <button type="button" aria-label="展开侧栏" className="ml-auto flex h-[39px] w-8 items-center justify-center rounded-l-lg bg-[#98989b]">
            <svg viewBox="0 0 12 20" className="h-5 w-3" fill="none" stroke="#fff" strokeWidth="3">
              <path d="M10 2l-8 8 8 8" />
            </svg>
          </button>
        </Indicator>
        <TurnoverChart />
        <Indicator
          name="RSI"
          readings={[
            { text: 'RSI1:75.36', color: 'text-[#222]' },
            { text: 'RSI2:66.90', color: 'text-[#fbb236]' },
            { text: 'RSI3:60.08', color: 'text-[#d321dc]' },
          ]}
        />
        <RsiChart />
        <Indicator
          name="KDJ"
          readings={[
            { text: 'K:83.05', color: 'text-[#222]', down: true },
            { text: 'D:83.84', color: 'text-[#fbb236]', down: true },
            { text: 'J:81.48', color: 'text-[#d321dc]', down: true },
          ]}
        />
        <KdjChart />
        <Indicator name="BBI" readings={[{ text: '12.48', color: 'text-[#222]' }]} />
        <BbiChart />
        <div className="flex h-[29px] items-center justify-between text-xl leading-6 text-[#666]">
          <time>20250529</time>
          <time>20250826</time>
        </div>
        <Scribbles />
      </main>
      <div className="h-3 border-t-2 border-[#e4e5e8]" />
      <BottomBar />
    </div>
  );
}
